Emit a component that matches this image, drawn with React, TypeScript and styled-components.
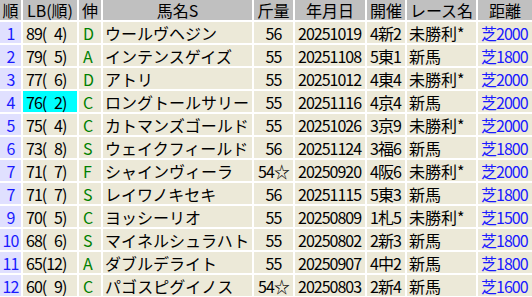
import React from "react";
import styled, { createGlobalStyle } from "styled-components";

const Global = createGlobalStyle`
  html, body { margin: 0; padding: 0; background: #ffffff; }
  body {
    font-family: "Noto Sans CJK JP", sans-serif;
    font-size: 16px;
  }
`;

const COLS = "21px 54px 22px 149px 39px 70px 38px 69px 54px";

const Table = styled.div`
  display: flex;
  flex-direction: column;
  gap: 2px;
  width: 532px;
  background: #ffffff;
`;

const Row = styled.div`
  display: grid;
  grid-template-columns: ${COLS};
  column-gap: 2px;
  height: 21px;
`;

const HeadRow = styled(Row)`
  height: 20px;
`;

const HeadCell = styled.div`
  background: #c0c0c0;
  color: #000000;
  display: flex;
  align-items: center;
  justify-content: center;
  white-space: nowrap;
  line-height: 1;
`;

type Align = "flex-start" | "center";

const Cell = styled.div<{ $align?: Align; $pad?: number; $bg?: string; $color?: string; $tight?: boolean }>`
  background: ${(p) => p.$bg ?? "#ece9d8"};
  color: ${(p) => p.$color ?? "#000000"};
  display: flex;
  align-items: center;
  justify-content: ${(p) => p.$align ?? "flex-start"};
  padding-left: ${(p) => p.$pad ?? 0}px;
  letter-spacing: ${(p) => (p.$tight ? "-1px" : "0")};
  white-space: nowrap;
  line-height: 1;
`;

const NumCell = styled(Cell)`
  background: #e0e0ff;
  color: #1a1aff;
  justify-content: center;
  letter-spacing: -1px;
`;

const Pad = styled.span`
  display: inline-block;
  width: calc(1ch - 1px);
`;

type Horse = {
  no: number;
  lb: number;
  rank: number;
  nobi: string;
  name: string;
  kin: string;
  date: string;
  kaisai: string;
  race: string;
  dist: string;
  hl?: boolean;
};

const data: Horse[] = [
  { no: 1, lb: 89, rank: 4, nobi: "D", name: "ウールヴヘジン", kin: "56", date: "20251019", kaisai: "4新2", race: "未勝利*", dist: "芝2000" },
  { no: 2, lb: 79, rank: 5, nobi: "A", name: "インテンスゲイズ", kin: "55", date: "20251108", kaisai: "5東1", race: "新馬", dist: "芝1800" },
  { no: 3, lb: 77, rank: 6, nobi: "D", name: "アトリ", kin: "55", date: "20251012", kaisai: "4東4", race: "未勝利*", dist: "芝2000" },
  { no: 4, lb: 76, rank: 2, nobi: "C", name: "ロングトールサリー", kin: "55", date: "20251116", kaisai: "4京4", race: "新馬", dist: "芝2000", hl: true },
  { no: 5, lb: 75, rank: 4, nobi: "C", name: "カトマンズゴールド", kin: "55", date: "20251026", kaisai: "3京9", race: "未勝利*", dist: "芝2000" },
  { no: 6, lb: 73, rank: 8, nobi: "S", name: "ウェイクフィールド", kin: "56", date: "20251124", kaisai: "3福6", race: "新馬", dist: "芝1800" },
  { no: 7, lb: 71, rank: 7, nobi: "F", name: "シャインヴィーラ", kin: "54☆", date: "20250920", kaisai: "4阪6", race: "未勝利*", dist: "芝2000" },
  { no: 7, lb: 71, rank: 7, nobi: "S", name: "レイワノキセキ", kin: "56", date: "20251115", kaisai: "5東3", race: "新馬", dist: "芝1800" },
  { no: 9, lb: 70, rank: 5, nobi: "C", name: "ヨッシーリオ", kin: "55", date: "20250809", kaisai: "1札5", race: "未勝利*", dist: "芝1500" },
  { no: 10, lb: 68, rank: 6, nobi: "S", name: "マイネルシュラハト", kin: "55", date: "20250802", kaisai: "2新3", race: "新馬", dist: "芝1800" },
  { no: 11, lb: 65, rank: 12, nobi: "A", name: "ダブルデライト", kin: "55", date: "20250907", kaisai: "4中2", race: "新馬", dist: "芝1800" },
  { no: 12, lb: 60, rank: 9, nobi: "C", name: "パゴスピグイノス", kin: "54☆", date: "20250803", kaisai: "2新4", race: "新馬", dist: "芝1600" },
];

const headers = ["順", "LB(順)", "伸", "馬名S", "斤量", "年月日", "開催", "レース名", "距離"];

export default function App() {
  return (
    <>
      <Global />
      <Table>
        <HeadRow>
          {headers.map((h) => (
            <HeadCell key={h}>{h}</HeadCell>
          ))}
        </HeadRow>
        {data.map((d, i) => (
          <Row key={i}>
            <NumCell>{d.no}</NumCell>
            <Cell $pad={3} $tight $bg={d.hl ? "#00ffff" : undefined}>
              {d.lb}(
              {d.rank < 10 && <Pad />}
              {d.rank})
            </Cell>
            <Cell $pad={4} $color="#008000">{d.nobi}</Cell>
            <Cell $pad={2}>{d.name}</Cell>
            <Cell $align="center" $tight>{d.kin}</Cell>
            <Cell $pad={3} $tight>{d.date}</Cell>
            <Cell $pad={3} $tight>{d.kaisai}</Cell>
            <Cell $pad={2}>{d.race}</Cell>
            <Cell $pad={3} $tight $color="#1a1aff">{d.dist}</Cell>
          </Row>
        ))}
      </Table>
    </>
  );
}
